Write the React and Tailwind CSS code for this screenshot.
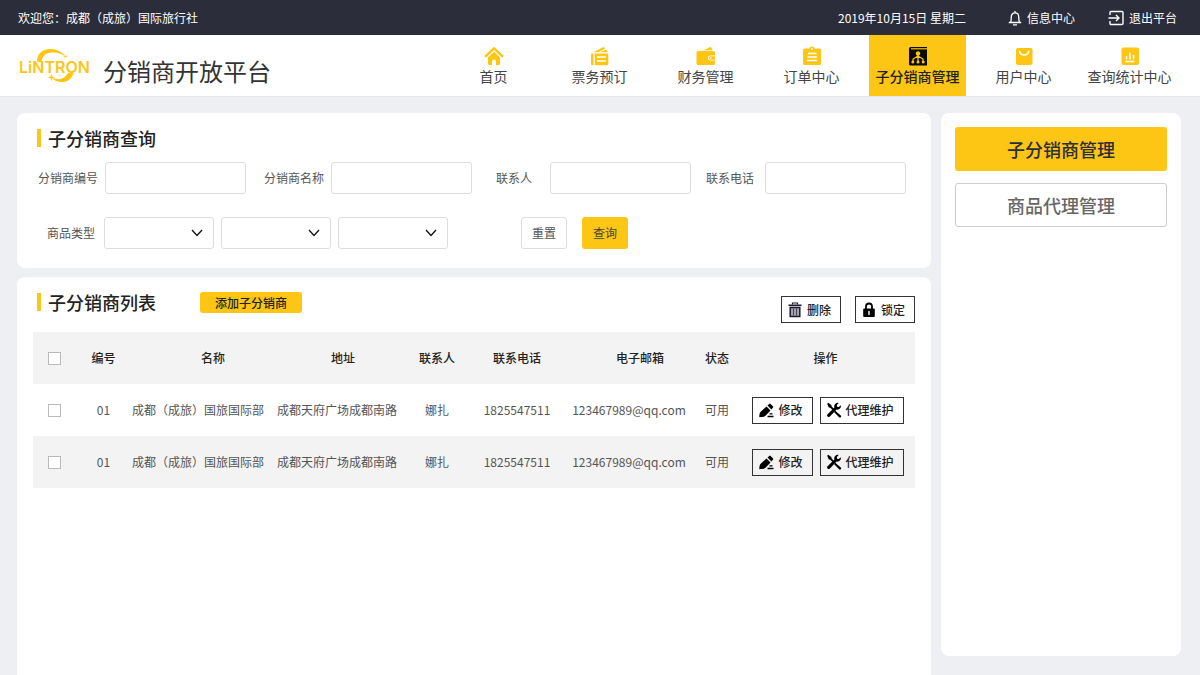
import { useState } from 'react';

function HomeIcon() {
  return (
    <svg viewBox="0 0 20 20" className="size-5" fill="#fdc514" aria-hidden="true">
      <path d="M1.8 10.2 10 2.300l8.200 7.900" fill="none" stroke="#fdc514" strokeWidth="2.400" strokeLinecap="round" strokeLinejoin="round" />
      <path d="M4 11.500 10 5.800l6 5.700V18a1 1 0 0 1-1 1h-3v-3.500a2 2 0 0 0-4 0V19H5a1 1 0 0 1-1-1z" />
    </svg>
  );
}

function TicketIcon() {
  return (
    <svg viewBox="0 0 20 20" className="size-5" fill="#fdc514" aria-hidden="true">
      <path d="M3.500 6.200 13 1.200a1 1 0 0 1 1.300.4l.7 1.200L8.200 6.200zM10.200 6.200l5.300-2.400a1 1 0 0 1 1.300.5l.9 1.900z" />
      <path d="M1.500 7.500h2v11.700h-1a1.500 1.500 0 0 1-1.500-1.500V8z" />
      <path d="M4.800 7.500h12.200a1.300 1.300 0 0 1 1.300 1.300v9.100a1.300 1.300 0 0 1-1.300 1.300H4.800z" />
      <path d="M7 11h9M7 15h9" stroke="#fff" strokeWidth="1.400" />
    </svg>
  );
}

function WalletIcon() {
  return (
    <svg viewBox="0 0 20 20" className="size-5" fill="#fdc514" aria-hidden="true">
      <path d="M7.500 4.200 14 1.200a1 1 0 0 1 1.300.4l1.400 2.600z" />
      <path d="M2 5h15.500A1.500 1.500 0 0 1 19 6.500V9.500h-4.500a2.500 2.500 0 0 0 0 5H19v3a1.500 1.500 0 0 1-1.500 1.500H2a1.500 1.500 0 0 1-1.500-1.500v-11A1.500 1.500 0 0 1 2 5z" />
      <path d="M14.600 10.200H19v3.600h-4.400a1.800 1.800 0 0 1 0-3.600z" />
      <circle cx="14.800" cy="12" r=".8" fill="#fff" />
    </svg>
  );
}

function OrderIcon() {
  return (
    <svg viewBox="0 0 20 20" className="size-5" aria-hidden="true">
      <path d="M2.500 2.500h4.800a2.800 2.800 0 0 1 5.400 0h4.800A1.500 1.500 0 0 1 19 4v13.500a1.500 1.500 0 0 1-1.500 1.500h-15A1.500 1.500 0 0 1 1 17.500V4a1.500 1.500 0 0 1 1.500-1.500z" fill="#fdc514" />
      <circle cx="10" cy="3" r="1" fill="#fff" />
      <path d="M6 7.500h8.500M5.500 11h9.500M5 14.500h10" stroke="#fff" strokeWidth="1.500" />
    </svg>
  );
}

function NetworkIcon() {
  return (
    <svg viewBox="0 0 20 20" className="size-5" aria-hidden="true">
      <path d="M2.800 1H19v18.500H2.500A1.500 1.500 0 0 1 1 18V2.800A1.800 1.800 0 0 1 2.800 1z" fill="#0b0b05" />
      <path d="M3 2.800h16" stroke="#fdc514" strokeWidth="1.200" />
      <path d="M10 8v7.500M10 10 5 13v2.500M10 10l5 3v2.500" fill="none" stroke="#fdc514" strokeWidth="1.200" />
      <g fill="#fdc514">
        <circle cx="10" cy="7.500" r="2.200" />
        <circle cx="4.800" cy="16" r="1.500" />
        <circle cx="10" cy="16" r="1.500" />
        <circle cx="15.200" cy="16" r="1.500" />
      </g>
    </svg>
  );
}

function UserIcon() {
  return (
    <svg viewBox="0 0 20 20" className="size-5" aria-hidden="true">
      <rect x="2" y="2" width="16.500" height="17" rx="2" fill="#fdc514" />
      <path d="M5.500 5.500c1.200 4.600 8 4.600 9.300 0" fill="none" stroke="#fff" strokeWidth="1.600" strokeLinecap="round" />
    </svg>
  );
}

function ChartIcon() {
  return (
    <svg viewBox="0 0 20 20" className="size-5" aria-hidden="true">
      <rect x="1.500" y="1.500" width="17.500" height="17.500" rx="2" fill="#fdc514" />
      <path d="M6.500 10v3.500M10 6.500v7M13.500 9v4.500M5.500 15.500h9" stroke="#fff" strokeWidth="1.500" />
    </svg>
  );
}

const NAV_ITEMS = [
  { label: '首页', Icon: HomeIcon },
  { label: '票务预订', Icon: TicketIcon },
  { label: '财务管理', Icon: WalletIcon },
  { label: '订单中心', Icon: OrderIcon },
  { label: '子分销商管理', Icon: NetworkIcon, active: true },
  { label: '用户中心', Icon: UserIcon },
  { label: '查询统计中心', Icon: ChartIcon },
];

const ROWS = [
  { id: 1, code: '01', name: '成都（成旅）国旅国际部', address: '成都天府广场成都南路', contact: '娜扎', phone: '1825547511', email: '123467989@qq.com', status: '可用' },
  { id: 2, code: '01', name: '成都（成旅）国旅国际部', address: '成都天府广场成都南路', contact: '娜扎', phone: '1825547511', email: '123467989@qq.com', status: '可用' },
];

function Logo() {
  return (
    <svg viewBox="0 0 72 36" className="h-9 w-[72px]" role="img" aria-label="LiNTRON">
      <g fill="#fdc514">
        <path d="M18 13.500C18-1 37-3 47 8.500 38 2.500 23 2 22.500 14.500z" />
        <path d="M44 8.500l5-1-2.500 2z" />
        <path d="M54.500 25C52 36 36 38 29.500 25.500 36 33.500 44 33 49 25z" />
        <path d="M32.500 25.500l1 3 3 1-3 1-1 3-1-3-3-1 3-1z" stroke="#fff" strokeWidth=".4" />
        <text x="0" y="25" fontSize="16" fontWeight="600" fontFamily="Inter, sans-serif">LiNTRON</text>
      </g>
    </svg>
  );
}

function TrashIcon() {
  return (
    <svg viewBox="0 0 14 16" className="h-4 w-3.5" fill="none" stroke="#1d1b2e" aria-hidden="true">
      <path d="M4.500 2.500V1h5v1.500" strokeWidth="1.200" />
      <path d="M.5 3.300h13" strokeWidth="1.600" />
      <path d="M2.200 5.500h9.600v9H2.200z" fill="#a5a3b0" strokeWidth="1.500" />
      <path d="M5.500 6.500v7M8.500 6.500v7" strokeWidth=".7" />
    </svg>
  );
}

function LockIcon() {
  return (
    <svg viewBox="0 0 14 16" className="h-4 w-3.5" aria-hidden="true">
      <path d="M4 7V4.500a3 3 0 0 1 6 0V7" fill="none" stroke="#000" strokeWidth="1.800" />
      <rect x="1.200" y="6.500" width="11.600" height="8.500" rx="1" />
      <path d="M7 9.500v3" stroke="#fff" strokeWidth="1.400" strokeLinecap="round" />
    </svg>
  );
}

function EditIcon() {
  return (
    <svg viewBox="0 0 15 15" className="size-[15px]" aria-hidden="true">
      <path d="M7.500 3.500l4 4-5 5.200c-1 1-3 1.500-6.200 1.500 0-2.800.4-4.600 1.400-5.500zM8.500 2.500l1.700-1.600a1 1 0 0 1 1.400 0l2.300 2.400a1 1 0 0 1 0 1.400l-1.500 1.700z" />
      <path d="M10.500 10.800h3M8.500 13.500h6" stroke="#000" strokeWidth="1.300" />
    </svg>
  );
}

function ToolsIcon() {
  return (
    <svg viewBox="0 0 16 16" className="size-4" aria-hidden="true">
      <path d="M1.200 1.800 2.200.8 5.300 3l.4 1.500 2.600 2.700-1.300 1.300-2.700-2.700-1.500-.3z" />
      <path d="M9.300 8.800 14.800 13.500a1.200 1.200 0 0 1-1.700 1.700L8 10z" />
      <path d="M14.800 3.200 12.800 5l-1.700-.3-.3-1.700 1.900-2a3.600 3.600 0 0 0-4.300 4.600L1.600 12.200a1.600 1.600 0 1 0 2.300 2.300l6.700-6.900a3.600 3.600 0 0 0 4.200-4.400z" />
    </svg>
  );
}

function OutlineButton({ icon, children }) {
  return (
    <button type="button" className="flex h-[27px] items-center gap-1 border border-[#333] pl-[5px] pr-[9px] text-xs font-medium text-[#222]">
      <span className="flex w-4 justify-center">{icon}</span>
      {children}
    </button>
  );
}

function SectionTitle({ children }) {
  return (
    <h2 className="flex h-5 items-center gap-[7px] text-lg/5 font-medium text-[#222]">
      <span className="h-[18px] w-1 bg-[#fdc514]" />
      {children}
    </h2>
  );
}

function TopBar() {
  return (
    <div className="flex h-[35px] items-center bg-[#2b2d3b] pl-[18px] pr-[23px] text-xs text-white">
      <span>欢迎您：成都（成旅）国际旅行社</span>
      <span className="ml-auto">2019年10月15日 星期二</span>
      <a href="#messages" className="ml-[42px] flex items-center gap-[5px]">
        <svg viewBox="0 0 14 16" className="h-4 w-3.5" fill="none" stroke="#fff" strokeWidth="1.300" aria-hidden="true">
          <path d="M.8 12.500h12.400M2.500 12.500c.8-1.500.7-3 .7-5C3.200 4.500 4.800 2.800 7 2.800s3.800 1.700 3.800 4.700c0 2 0 3.500.7 5M7 2.800V1M5 14.800h4" />
        </svg>
        信息中心
      </a>
      <a href="#logout" className="ml-[33px] flex items-center gap-[5px]">
        <svg viewBox="0 0 16 16" className="size-4" fill="none" stroke="#fff" strokeWidth="1.400" aria-hidden="true">
          <path d="M2 5V2.500A1 1 0 0 1 3 1.500h11a1 1 0 0 1 1 1v11a1 1 0 0 1-1 1H3a1 1 0 0 1-1-1V11M.500 8H11M8 5l3 3-3 3" />
        </svg>
        退出平台
      </a>
    </div>
  );
}

function Header() {
  return (
    <header className="flex h-[62px] items-center border-b border-[#e2e8ec] bg-white pl-[19px] pr-[22px]">
      <Logo />
      <h1 className="ml-3 mt-2.5 text-2xl text-[#333]">分销商开放平台</h1>
      <nav className="ml-auto flex gap-[9px] self-stretch">
        {NAV_ITEMS.map(({ label, Icon, active }) => (
          <a
            key={label}
            href="#nav"
            aria-current={active ? 'page' : undefined}
            className={`flex w-[97px] flex-col items-center pt-[11px] text-sm ${
              active ? 'bg-[#fdc514] font-medium text-[#222]' : 'text-[#444]'
            }`}
          >
            <Icon />
            {label}
          </a>
        ))}
      </nav>
    </header>
  );
}

function SelectBox({ label }) {
  return (
    <div className="relative w-[110px]">
      <select aria-label={label} className="h-8 w-full appearance-none rounded-[3px] border border-[#ddd] bg-white px-2" />
      <svg viewBox="0 0 12 8" className="pointer-events-none absolute right-[11px] top-3 h-2 w-3" fill="none" stroke="#111" strokeWidth="1.300" aria-hidden="true">
        <path d="M1 1l5 5.500L11 1" />
      </svg>
    </div>
  );
}

function QueryPanel() {
  const inputClass = 'h-8 w-full min-w-0 rounded-[3px] border border-[#ddd] bg-white px-2';
  return (
    <section className="rounded-lg bg-white pb-[19px] pl-5 pr-[25px] pt-[15px]">
      <SectionTitle>子分销商查询</SectionTitle>
      <form className="mt-3.5 text-xs text-[#555]">
        <div className="grid grid-cols-[68px_1fr_85px_1fr_78px_1fr_74px_1fr] items-center">
          <label htmlFor="code" className="pl-px">分销商编号</label>
          <input id="code" className={inputClass} />
          <label htmlFor="name" className="pl-[18px]">分销商名称</label>
          <input id="name" className={inputClass} />
          <label htmlFor="contact" className="pl-6">联系人</label>
          <input id="contact" className={inputClass} />
          <label htmlFor="phone" className="pl-[15px]">联系电话</label>
          <input id="phone" className={inputClass} />
        </div>
        <div className="mt-[23px] flex items-center gap-[7px]">
          <span className="w-[60px] pl-2.5">商品类型</span>
          <SelectBox label="商品类型一级" />
          <SelectBox label="商品类型二级" />
          <SelectBox label="商品类型三级" />
          <button type="reset" className="ml-[66px] h-8 w-[46px] rounded-[3px] border border-[#ddd] bg-white">重置</button>
          <button type="button" className="ml-2 h-8 w-[46px] rounded-[3px] bg-[#fdc514] text-[#444]">查询</button>
        </div>
      </form>
    </section>
  );
}

function CheckBox({ label, checked, onChange }) {
  return (
    <input
      type="checkbox"
      aria-label={label}
      checked={checked}
      onChange={onChange}
      className="ml-[15px] block size-[13px] appearance-none border border-[#bbb] bg-white checked:bg-[#fdc514]"
    />
  );
}

function ListPanel() {
  const [selected, setSelected] = useState([]);

  const toggle = (id) => {
    setSelected((prev) => (prev.includes(id) ? prev.filter((x) => x !== id) : [...prev, id]));
  };

  return (
    <section className="flex-1 rounded-t-lg bg-white px-4 pt-[15px]">
      <div className="flex h-10 items-start pl-1">
        <SectionTitle>子分销商列表</SectionTitle>
        <button type="button" className="ml-11 h-[21px] w-[102px] rounded-[3px] bg-[#fdc514] text-xs font-medium text-[#222]">
          添加子分销商
        </button>
        <div className="ml-auto mt-1 flex gap-3.5">
          <OutlineButton icon={<TrashIcon />}>删除</OutlineButton>
          <OutlineButton icon={<LockIcon />}>锁定</OutlineButton>
        </div>
      </div>

      <table className="w-full table-fixed text-center text-xs">
        <colgroup>
          <col className="w-[42px]" />
          <col className="w-[57px]" />
          <col className="w-[134px]" />
          <col className="w-[142px]" />
          <col className="w-[58px]" />
          <col className="w-[102px]" />
          <col className="w-[122px]" />
          <col className="w-[54px]" />
          <col className="w-[171px]" />
        </colgroup>
        <thead>
          <tr className="h-[52px] bg-[#f3f3f3] text-[#222] [&>th]:font-medium">
            <th>
              <CheckBox
                label="全选"
                checked={selected.length === ROWS.length}
                onChange={() => setSelected(selected.length === ROWS.length ? [] : ROWS.map((r) => r.id))}
              />
            </th>
            <th>编号</th>
            <th className="pl-7">名称</th>
            <th className="pl-3">地址</th>
            <th>联系人</th>
            <th>联系电话</th>
            <th className="pl-[22px]">电子邮箱</th>
            <th>状态</th>
            <th className="pr-2">操作</th>
          </tr>
        </thead>
        <tbody>
          {ROWS.map((row) => (
            <tr key={row.id} className="h-[52px] whitespace-nowrap text-[#555] even:bg-[#f3f3f3]">
              <td>
                <CheckBox label={`选择 ${row.name}`} checked={selected.includes(row.id)} onChange={() => toggle(row.id)} />
              </td>
              <td>{row.code}</td>
              <td className="pr-1">{row.name}</td>
              <td>{row.address}</td>
              <td>{row.contact}</td>
              <td>{row.phone}</td>
              <td>{row.email}</td>
              <td>{row.status}</td>
              <td className="pr-[3px]">
                <div className="flex justify-center gap-[7px]">
                  <OutlineButton icon={<EditIcon />}>修改</OutlineButton>
                  <OutlineButton icon={<ToolsIcon />}>代理维护</OutlineButton>
                </div>
              </td>
            </tr>
          ))}
        </tbody>
      </table>
    </section>
  );
}

function SideMenu() {
  return (
    <aside className="mb-[19px] flex w-60 flex-col gap-3 rounded-lg bg-white px-3.5 pt-3.5">
      <button type="button" className="h-11 rounded-[3px] bg-[#fdc514] text-lg/5 font-medium text-[#2b2d3b]">
        子分销商管理
      </button>
      <button type="button" className="h-11 rounded-[3px] border border-[#ccc] text-lg/5 font-medium text-[#666]">
        商品代理管理
      </button>
    </aside>
  );
}

export default function App() {
  return (
    <div className="flex min-h-screen flex-col bg-[#eeeff2] font-['Noto_Sans_CJK_SC',sans-serif]">
      <TopBar />
      <Header />
      <main className="flex flex-1 gap-2.5 pl-[17px] pr-[19px] pt-4">
        <div className="flex min-w-0 flex-1 flex-col gap-[9px]">
          <QueryPanel />
          <ListPanel />
        </div>
        <SideMenu />
      </main>
    </div>
  );
}
